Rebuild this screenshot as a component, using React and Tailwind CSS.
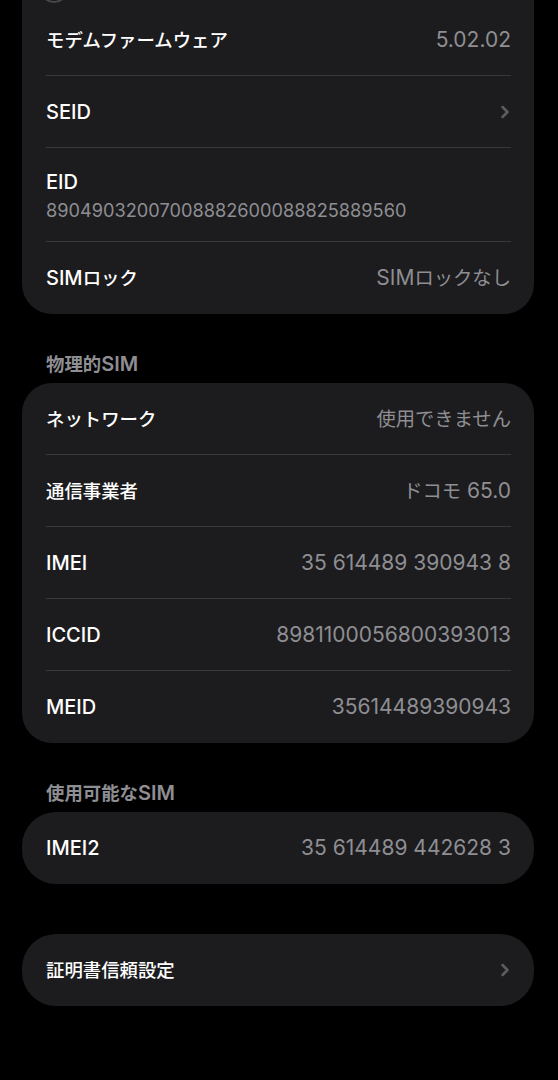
import { ChevronRight } from "lucide-react";

const FONT = { fontFamily: "Inter, 'Noto Sans CJK JP', sans-serif" };

// Japanese runs are set a bit smaller than Latin text, as on iOS
function T({ text }) {
  const parts = text.split(/([\u3000-\u9fff\uff00-\uffef]+)/).filter(Boolean);
  return parts.map((p, i) =>
    /[\u3000-\u9fff\uff00-\uffef]/.test(p) ? (
      <span key={i} className="text-[0.92em]">{p}</span>
    ) : (
      <span key={i}>{p}</span>
    )
  );
}

function Row({ label, value, chevron, last }) {
  return (
    <div className="pl-6 pr-[23px]">
      <div className={"flex items-center justify-between h-[72px] " + (last ? "" : "border-b border-[#38383a]")}>
        <span className="text-[20px] font-medium text-white"><T text={label} /></span>
        {chevron ? (
          <ChevronRight className="w-5 h-5 text-[#5d5d61] -mr-1" strokeWidth={3} />
        ) : (
          <span className="text-[21px] text-[#8e8e93]"><T text={value} /></span>
        )}
      </div>
    </div>
  );
}

function Header({ children }) {
  return (
    <div className="px-6 pt-[39px] pb-[8px] text-[20px] font-semibold text-[#8e8e93] leading-[22px]">
      <T text={children} />
    </div>
  );
}

export default function App() {
  return (
    <div className="min-h-screen bg-black pl-[22px] pr-[24px] pb-[76px] overflow-hidden" style={FONT}>
      <div className="bg-[#1c1c1e] rounded-b-[30px] -mt-[40px]">
        <div className="h-[44px] px-[18px] flex items-end">
          <div className="w-[28px] h-[28px] rounded-full border-2 border-[#48484c] mb-[1px]" />
        </div>
        <Row label="モデムファームウェア" value="5.02.02" />
        <Row label="SEID" chevron />
        <div className="pl-6 pr-[23px]">
          <div className="h-[94px] border-b border-[#38383a] flex flex-col justify-center pt-[3px]">
            <span className="text-[20px] font-medium text-white leading-[26px]">EID</span>
            <span className="text-[18.2px] text-[#8e8e93] leading-[26px] mt-[2px]">89049032007008882600088825889560</span>
          </div>
        </div>
        <Row label="SIMロック" value="SIMロックなし" last />
      </div>

      <Header>物理的SIM</Header>
      <div className="bg-[#1c1c1e] rounded-[30px]">
        <Row label="ネットワーク" value="使用できません" />
        <Row label="通信事業者" value="ドコモ 65.0" />
        <Row label="IMEI" value="35 614489 390943 8" />
        <Row label="ICCID" value="8981100056800393013" />
        <Row label="MEID" value="35614489390943" last />
      </div>

      <Header>使用可能なSIM</Header>
      <div className="bg-[#1c1c1e] rounded-[34px]">
        <Row label="IMEI2" value="35 614489 442628 3" last />
      </div>

      <div className="bg-[#1c1c1e] rounded-[34px] mt-[50px]">
        <Row label="証明書信頼設定" chevron last />
      </div>
    </div>
  );
}
